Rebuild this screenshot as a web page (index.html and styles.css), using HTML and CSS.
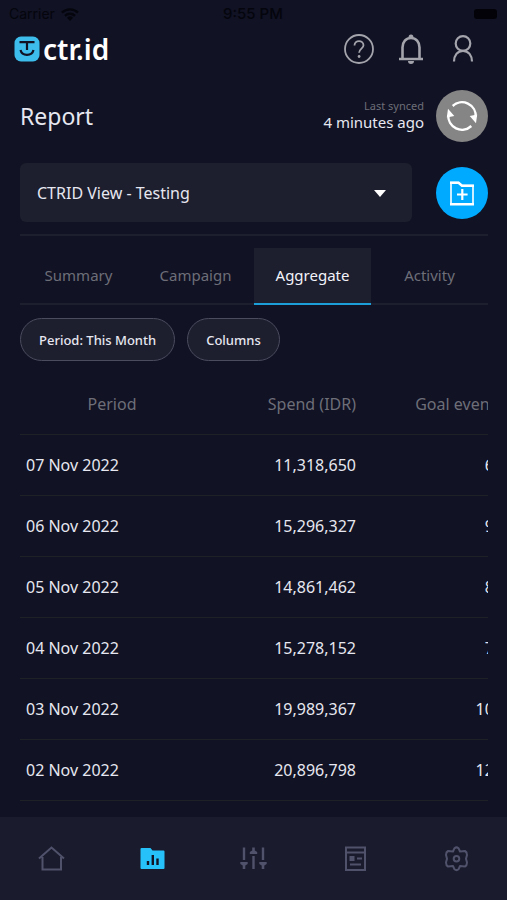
FILE: index.html
```html
<!DOCTYPE html>
<html lang="en">
<head>
<meta charset="utf-8">
<meta name="viewport" content="width=device-width, initial-scale=1">
<title>ctr.id – Report</title>
<link rel="stylesheet" href="styles.css">
</head>
<body>
<div class="status">
  <span class="carrier">Carrier
    <svg width="18" height="13" viewBox="0 0 18 13" aria-hidden="true"><g fill="none" stroke="currentColor" stroke-width="2.4"><path d="M1 4.6a11.5 11.5 0 0 1 16 0"/><path d="M4 7.8a7.2 7.2 0 0 1 10 0"/></g><path d="M6 9.8a4.3 4.3 0 0 1 6 0L9 13z" fill="currentColor"/></svg>
  </span>
  <span class="clock">9:55 PM</span>
  <span class="battery"></span>
</div>
<header class="topbar">
  <a class="brand" href="#">
    <svg width="26" height="26" viewBox="0 0 26 26" aria-hidden="true"><rect x="0.5" y="0.5" width="25" height="25" rx="6.5" fill="#3dbdec"/><g fill="none" stroke="#111223" stroke-width="2.2"><path d="M5.500 6.200h15M13 6v8M6.500 14c1.500 6.500 11.500 6.500 13 0"/></g></svg>
    <span>ctr.id</span>
  </a>
  <nav class="actions" aria-label="Account">
    <button type="button" aria-label="Help"><svg width="32" height="32" viewBox="0 0 32 32"><g fill="none" stroke="currentColor" stroke-width="1.8"><circle cx="16" cy="16" r="14"/><path d="M11.500 12.500c0-6 9-5.800 9-.3 0 3.400-4.400 3.600-4.400 7.600"/></g><circle cx="16.100" cy="23.500" r="1.400" fill="currentColor"/></svg></button>
    <button type="button" aria-label="Notifications"><svg width="32" height="32" viewBox="0 0 32 32"><path d="M7.500 26V14.500c0-5.500 3.500-9.500 8.500-9.500s8.500 4 8.500 9.500V26M4 26h24" fill="none" stroke="currentColor" stroke-width="2.600"/><path d="M13.500 4.500a2.500 3 0 0 1 5 0zM13 28h6a3 3 0 0 1-6 0z" fill="currentColor"/></svg></button>
    <button type="button" aria-label="Profile"><svg width="32" height="32" viewBox="0 0 32 32"><g fill="none" stroke="currentColor" stroke-width="2.200"><circle cx="16" cy="10.500" r="7.300"/><path d="M7 28.500c0-6 3.500-10.700 9-10.700s9 4.700 9 10.700"/></g></svg></button>
  </nav>
</header>
<main>
  <div class="heading">
    <h1>Report</h1>
    <p class="sync"><small>Last synced</small><span>4 minutes ago</span></p>
    <button type="button" class="round" aria-label="Sync"><svg width="32" height="32" viewBox="0 0 32 32"><g fill="none" stroke="#fff" stroke-width="2.400"><path d="M6.700 6A13.700 13.700 0 0 1 29.700 17"/><path d="M25.300 26A13.700 13.700 0 0 1 2.300 15"/></g><path d="M2 8.700L8.300 16 .8 17.500zM30 23.300L23.700 16l7.500-1.500z" fill="#fff"/></svg></button>
  </div>
  <div class="picker">
    <div class="select">
      <select aria-label="Report view"><option>CTRID View - Testing</option></select>
      <svg width="12" height="7" viewBox="0 0 12 7" aria-hidden="true"><path d="M0 0h12L6 7z" fill="#fff"/></svg>
    </div>
    <button type="button" class="round add" aria-label="New view"><svg width="28" height="28" viewBox="0 0 28 28"><path d="M3 25V3.500h7.500l3.500 3h11V25z" fill="none" stroke="#fff" stroke-width="1.600"/><path d="M2 2.500h9l3.500 3H26V8H13.500L10 5H2zM2 24h24v2.500H2z" fill="#fff"/><path d="M14.300 10v11M9 15.500h10.600" stroke="#fff" stroke-width="2.200"/></svg></button>
  </div>
  <div class="tabs" role="tablist">
    <button type="button" role="tab">Summary</button>
    <button type="button" role="tab">Campaign</button>
    <button type="button" role="tab" aria-selected="true">Aggregate</button>
    <button type="button" role="tab">Activity</button>
  </div>
  <div class="filters">
    <button type="button">Period: This Month</button>
    <button type="button">Columns</button>
  </div>
  <div class="scroller">
    <table>
      <thead><tr><th>Period</th><th>Spend (IDR)</th><th>Goal events</th></tr></thead>
      <tbody>
        <tr><td>07 Nov 2022</td><td>11,318,650</td><td>60</td></tr>
        <tr><td>06 Nov 2022</td><td>15,296,327</td><td>90</td></tr>
        <tr><td>05 Nov 2022</td><td>14,861,462</td><td>80</td></tr>
        <tr><td>04 Nov 2022</td><td>15,278,152</td><td>70</td></tr>
        <tr><td>03 Nov 2022</td><td>19,989,367</td><td>100</td></tr>
        <tr><td>02 Nov 2022</td><td>20,896,798</td><td>120</td></tr>
      </tbody>
    </table>
  </div>
</main>
<nav class="bottom" aria-label="Main">
  <a href="#" aria-label="Home"><svg width="28" height="28" viewBox="0 0 28 28"><path d="M2 13.500L14.500 2.500 27 13.500M5.500 12v12.500h18.500V12" fill="none" stroke="currentColor" stroke-width="2"/></svg></a>
  <a href="#" class="current" aria-label="Report"><svg width="28" height="28" viewBox="0 0 28 28"><path d="M2.500 4q0-1 1-1h9l2 2.500h11q1 0 1 1V23q0 1-1 1h-22q-1 0-1-1z" fill="currentColor"/><path d="M10 16v4M14.800 10V20M19.500 13.500V20" stroke="#111223" stroke-width="2.400"/></svg></a>
  <a href="#" aria-label="Controls"><svg width="28" height="28" viewBox="0 0 28 28"><path d="M5 2.500v12.500M14.500 11v13M24 2.500v12.500" fill="none" stroke="currentColor" stroke-width="2.400"/><path d="M1.300 17h7.400v2L6.300 20.500V24H3.700v-3.500L1.300 19zM20.300 17h7.400v2l-2.400 1.500V24h-2.600v-3.500L20.300 19zM10.800 9h7.400V7l-2.400-1.500V2.500h-2.600v3L10.800 7z" fill="currentColor"/></svg></a>
  <a href="#" aria-label="News"><svg width="28" height="28" viewBox="0 0 28 28"><path d="M5 2.500h19v22.500H5zM5 7.500h19M16 13.500h5M9 19.500h11" fill="none" stroke="currentColor" stroke-width="2"/><path d="M8.500 11h5v5h-5z" fill="currentColor"/></svg></a>
  <a href="#" aria-label="Settings"><svg width="28" height="28" viewBox="0 0 28 28"><g fill="none" stroke="currentColor" stroke-width="2" stroke-linejoin="round"><path d="M12.500 3.200Q14.500 1.500 16.500 3.200L18 6.500l5-.5q2 1 2 4l-1 3.800 1 3.700q0 3-2 4l-5-.5-1.500 3.300q-2 1.700-4 0L11 21l-5 .5q-2-1-2-4l1-3.700L4 10q0-3 2-4l5 .5z"/><circle cx="14.500" cy="13.800" r="2.800"/></g></svg></a>
</nav>
</body>
</html>
```

FILE: styles.css
```css
* { box-sizing: border-box; }
body {
  margin: 0;
  min-height: 100vh;
  display: flex;
  flex-direction: column;
  background: #111223;
  color: #e6e7f0;
  font: 15px/20px "Noto Sans", sans-serif;
}
button, select { font: inherit; color: inherit; border: 0; background: none; padding: 0; margin: 0; }
svg { display: block; }
a { color: inherit; text-decoration: none; }

.status {
  display: grid;
  grid-template-columns: 1fr auto 1fr;
  align-items: center;
  height: 28px;
  padding: 0 10px 0 9px;
  color: #04050d;
  font: 14px/20px Inter, sans-serif;
}
.carrier { display: flex; align-items: center; gap: 6px; }
.clock { font-size: 15px; font-weight: 500; }
.battery { justify-self: end; width: 23px; height: 10px; border-radius: 3px; background: #020208; }

.topbar { display: flex; align-items: center; justify-content: space-between; height: 42px; padding: 0 28px 0 14px; }
.brand { display: flex; align-items: center; gap: 3px; color: #fff; font: 600 28px/32px "Noto Sans", sans-serif; }
.actions { display: flex; gap: 20px; color: #a4a4ad; }

main { flex: 1; padding: 20px 19px 0 20px; }
.heading { display: flex; align-items: center; gap: 12px; }
h1 { margin: 0 auto 0 0; font-size: 23px; line-height: 28px; font-weight: 400; }
.sync { margin: 0; display: flex; flex-direction: column; text-align: right; }
.sync small { font-size: 11px; line-height: 12px; color: #6d6e78; }
.round { flex: none; display: grid; place-items: center; width: 52px; height: 52px; border-radius: 50%; background: #858585; }
.add { background: #00aaff; }
.picker { display: flex; align-items: center; gap: 24px; margin-top: 21px; padding-bottom: 12px; border-bottom: 2px solid #1d1e2e; }
.select { position: relative; flex: 1; }
.select select { width: 100%; height: 59px; padding: 0 48px 0 17px; border-radius: 6px; background: #1d1e2e; font-size: 16px; appearance: none; }
.select svg { position: absolute; right: 26px; top: 27px; pointer-events: none; }

.tabs { display: grid; grid-template-columns: repeat(4, 1fr); margin-top: 12px; border-bottom: 2px solid #1d1e2e; }
.tabs button { height: 57px; margin-bottom: -2px; padding-bottom: 2px; border-bottom: 2px solid transparent; color: #6d6e78; }
.tabs [aria-selected="true"] { color: #f2f3fa; background: #1d1e2e; border-bottom-color: #1c9fd9; }

.filters { display: flex; gap: 12px; margin-top: 13px; }
.filters button { height: 43px; padding: 0 18px; border: 1px solid #4b4c5e; border-radius: 22px; background: #1d1e2e; font-size: 13px; font-weight: 500; }

.scroller { overflow: hidden; margin-top: 12px; }
table { width: 487px; table-layout: fixed; border-collapse: collapse; }
tr { height: 61px; border-bottom: 1px solid #1e2126; }
th, td { padding: 0; text-align: right; font-size: 16px; font-weight: 400; }
th { padding-top: 2px; color: #6d6e78; }
th:first-child { width: 184px; text-align: center; }
td:first-child { padding-left: 6px; text-align: left; }
th:nth-child(2) { width: 152px; }
th:last-child, td:last-child { padding-right: 4px; }

.bottom { display: grid; grid-template-columns: repeat(5, 1fr); justify-items: center; align-items: center; height: 83px; background: #1a1b2c; color: #50516b; }
.bottom .current { color: #27c1f9; }
```
